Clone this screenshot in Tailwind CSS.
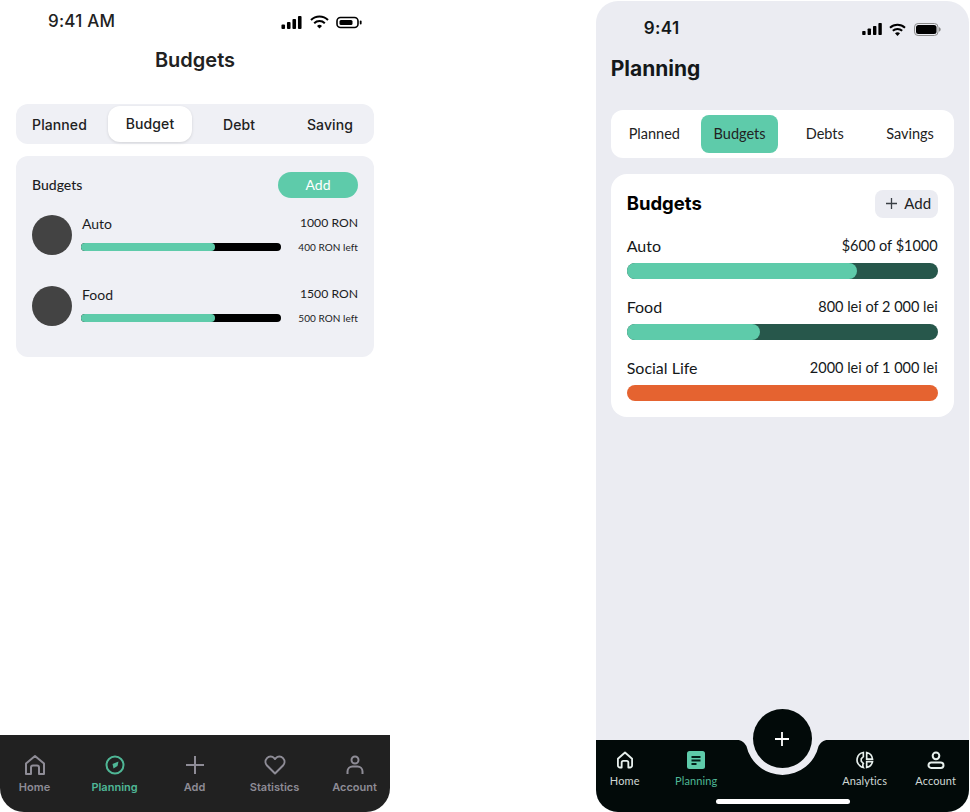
<!DOCTYPE html>
<html>
<head>
<meta charset="utf-8">
<script src="https://cdn.jsdelivr.net/npm/@tailwindcss/browser@4"></script>
</head>
<body class="bg-white">
<div class="flex w-[970px] h-[812px] overflow-hidden bg-white">

  <!-- LEFT PHONE -->
  <div class="w-[390px] h-[812px] flex flex-col font-['Inter',sans-serif] text-[#1c1c1e]">
    <div class="h-[42px] flex items-center justify-between pl-[48px] pr-[28px]">
      <span class="text-[17px] font-medium tracking-[0.2px] text-[#222] mt-[1px]">9:41 AM</span>
      <div class="flex items-center mt-[2px]">
        <svg width="21" height="13" viewBox="0 0 20.100 13"><rect x="0" y="8.500" width="3.600" height="4.500" rx="1"/><rect x="5.500" y="6" width="3.600" height="7" rx="1"/><rect x="11" y="3" width="3.600" height="10" rx="1"/><rect x="16.500" y="0" width="3.600" height="13" rx="1"/></svg>
        <svg width="19" height="14" viewBox="0 0 19 14" fill="none" stroke="#000" stroke-width="2" class="ml-[8px]"><path d="M1 5a12 12 0 0 1 17 0"/><path d="M4.200 8.200a7.500 7.500 0 0 1 10.600 0"/><path d="M9.500 13.600 7 11a3.500 3.500 0 0 1 5 0z" fill="#000" stroke="none"/></svg>
        <svg width="26" height="13" viewBox="0 0 26 13" class="ml-[7px]"><rect x="1" y="1.500" width="21" height="10" rx="3.500" fill="none" stroke="#000" stroke-width="1.600"/><rect x="3.500" y="4" width="13" height="5" rx="1.500"/><rect x="23.800" y="4.500" width="1.800" height="4" rx="0.900"/></svg>
      </div>
    </div>
    <h1 class="mt-[4px] h-[28px] text-center text-[20px] leading-[28px] font-semibold text-[#212121]">Budgets</h1>
    <div class="mx-4 mt-[30px] h-[40px] bg-[#eff0f5] rounded-[12px] grid grid-cols-[92px_84px_94px_88px] items-center text-[14px] font-medium text-center text-[#212121] tracking-[0.1px]">
      <span class="pr-[5px]">Planned</span>
      <span class="h-[36px] leading-[36px] bg-white rounded-[12px] shadow-[0_1px_3px_rgba(0,0,0,0.12)]">Budget</span>
      <span>Debt</span>
      <span>Saving</span>
    </div>
    <div class="mx-4 mt-[12px] h-[201px] bg-[#eff0f5] rounded-[12px] p-4 font-['Lato',sans-serif] text-[#1c1c1e]">
      <div class="flex items-center justify-between h-[26px]">
        <span class="text-[14px] font-medium -mt-[2px]">Budgets</span>
        <span class="w-[80px] h-[26px] leading-[26px] rounded-full bg-[#5ecbaa] text-white text-center text-[14px]">Add</span>
      </div>
      <div class="flex flex-col gap-[31px] mt-[17px]">
        <div class="flex h-[40px]">
          <div class="w-10 h-10 rounded-full bg-[#434343] shrink-0"></div>
          <div class="ml-[9px] w-[200px] shrink-0">
            <div class="pl-[1px] text-[14px] leading-[18px] h-[28px]">Auto</div>
            <div class="h-[8px] rounded-full bg-black"><div class="h-full w-[134px] rounded-full bg-[#5ecbaa]"></div></div>
          </div>
          <div class="flex-1 text-right">
            <div class="text-[12.200px] leading-[16px] h-[25px]">1000 RON</div>
            <div class="text-[10px] leading-[14px] tracking-[0.05px]">400 RON left</div>
          </div>
        </div>
        <div class="flex h-[40px]">
          <div class="w-10 h-10 rounded-full bg-[#434343] shrink-0"></div>
          <div class="ml-[9px] w-[200px] shrink-0">
            <div class="pl-[1px] text-[14px] leading-[18px] h-[28px]">Food</div>
            <div class="h-[8px] rounded-full bg-black"><div class="h-full w-[134px] rounded-full bg-[#5ecbaa]"></div></div>
          </div>
          <div class="flex-1 text-right">
            <div class="text-[12.200px] leading-[16px] h-[25px]">1500 RON</div>
            <div class="text-[10px] leading-[14px] tracking-[0.05px]">500 RON left</div>
          </div>
        </div>
      </div>
    </div>
    <nav class="mt-auto h-[77px] bg-[#212121] rounded-b-[24px] flex items-start text-[11px] font-semibold text-[#8e8c96] overflow-hidden">
      <div class="flex -ml-[5.500px] pt-[18px]">
        <div class="w-20 flex flex-col items-center">
          <svg width="24" height="24" viewBox="0 0 24 24" fill="none" stroke="#8e8c96" stroke-width="2" stroke-linejoin="round"><path d="M3 10.500 12 3l9 7.500V21H16v-6.500a2 2 0 0 0-2-2h-4a2 2 0 0 0-2 2V21H3z"/></svg>
          <span class="mt-[2px] leading-[16px]">Home</span>
        </div>
        <div class="w-20 flex flex-col items-center text-[#4fb796]">
          <svg width="24" height="24" viewBox="0 0 24 24" fill="none" stroke="#4fb796" stroke-width="2"><circle cx="12" cy="12" r="8.500"/><path d="M15.500 8.500 14.500 13 10.500 15.500 9.500 11z" fill="#4fb796" stroke="none"/></svg>
          <span class="mt-[2px] leading-[16px]">Planning</span>
        </div>
        <div class="w-20 flex flex-col items-center">
          <svg width="24" height="24" viewBox="0 0 24 24" fill="none" stroke="#8e8c96" stroke-width="2"><path d="M12 3v18M3 12h18"/></svg>
          <span class="mt-[2px] leading-[16px]">Add</span>
        </div>
        <div class="w-20 flex flex-col items-center">
          <svg width="24" height="24" viewBox="0 0 24 24" fill="none" stroke="#8e8c96" stroke-width="2" stroke-linejoin="round"><path d="M12 20.500 4 12.500a5.400 5.400 0 0 1 0-7.400 5 5 0 0 1 7.200 0l.8.9.8-.9a5 5 0 0 1 7.200 0 5.400 5.400 0 0 1 0 7.400z"/></svg>
          <span class="mt-[2px] leading-[16px]">Statistics</span>
        </div>
        <div class="w-20 flex flex-col items-center">
          <svg width="24" height="24" viewBox="0 0 24 24" fill="none" stroke="#8e8c96" stroke-width="2"><circle cx="12" cy="7" r="3.500"/><path d="M4.500 21v-2.500a5 5 0 0 1 5-5h5a5 5 0 0 1 5 5V21"/></svg>
          <span class="mt-[2px] leading-[16px]">Account</span>
        </div>
      </div>
    </nav>
  </div>

  <!-- RIGHT PHONE -->
  <div class="ml-[205.700px] w-[373px] h-[811px] mt-[1px] flex flex-col bg-[#ebecf2] rounded-[22px] font-['Lato',sans-serif] text-[#14181a] relative overflow-hidden">
    <div class="h-[55px] flex items-center justify-between pl-[48px] pr-[28px] pt-[1px]">
      <span class="text-[17px] font-semibold font-['Inter',sans-serif] tracking-[0.4px]">9:41</span>
      <div class="flex items-center">
        <svg width="20" height="12" viewBox="0 0 19.600 12"><rect x="0" y="8" width="3.400" height="4" rx="0.800"/><rect x="5.400" y="5.500" width="3.400" height="6.500" rx="0.800"/><rect x="10.800" y="3" width="3.400" height="9" rx="0.800"/><rect x="16.200" y="0" width="3.400" height="12" rx="0.800"/></svg>
        <svg width="17" height="13" viewBox="0 0 17 13" fill="none" stroke="#000" stroke-width="2" class="ml-[7px]"><path d="M1 4.800a11 11 0 0 1 15 0"/><path d="M3.800 7.800a7 7 0 0 1 9.400 0"/><path d="M8.500 13 6 10.300a3.400 3.400 0 0 1 5 0z" fill="#000" stroke="none"/></svg>
        <svg width="27" height="13" viewBox="0 0 27 13" class="ml-[8px]"><rect x="0.500" y="0.500" width="23.500" height="12" rx="3.600" fill="none" stroke="#8a8a8a"/><rect x="2" y="2" width="20.500" height="9" rx="2.500"/><path d="M25 4.300v4.400c1-.3 1.700-1.200 1.700-2.200S26 4.600 25 4.300z" fill="#8a8a8a"/></svg>
      </div>
    </div>
    <h1 class="mt-[1px] pl-[15px] h-[24px] text-[21px] leading-[24px] font-bold font-['Inter',sans-serif] text-[#14181a]">Planning</h1>
    <div class="mx-[15px] mt-[29px] h-[48px] bg-white rounded-[12px] grid grid-cols-4 items-center px-[1px] text-[14.500px] text-center text-[#222]">
      <span>Planned</span>
      <span class="h-[38px] leading-[38px] bg-[#5ecbaa] rounded-[8px] mx-[4px]">Budgets</span>
      <span>Debts</span>
      <span>Savings</span>
    </div>
    <div class="mx-[15px] mt-[16px] h-[243px] bg-white rounded-[16px] px-4 pt-4">
      <div class="flex items-center justify-between h-[28px]">
        <span class="text-[18.500px] font-bold font-['Inter',sans-serif] text-black -mt-[1px]">Budgets</span>
        <span class="w-[63px] h-[28px] bg-[#ebecf2] rounded-[8px] flex items-center justify-center gap-[7px] pl-[5px] pb-[1px] text-[15px] text-[#222]">
          <svg width="11" height="11" viewBox="0 0 11 11" stroke="#3a3f45" stroke-width="1.300"><path d="M5.500 0v11M0 5.500h11"/></svg>Add
        </span>
      </div>
      <div class="flex flex-col gap-[18px] mt-[18px]">
        <div>
          <div class="flex items-center justify-between h-[20px] text-[16px]"><span>Auto</span><span class="text-[14.500px]">$600 of $1000</span></div>
          <div class="mt-[7px] h-4 rounded-full bg-[#27574b]"><div class="h-full w-[230px] rounded-full bg-[#5ecbaa]"></div></div>
        </div>
        <div>
          <div class="flex items-center justify-between h-[20px] text-[16px]"><span>Food</span><span class="text-[14.500px]">800 lei of 2 000 lei</span></div>
          <div class="mt-[7px] h-4 rounded-full bg-[#27574b]"><div class="h-full w-[133px] rounded-full bg-[#5ecbaa]"></div></div>
        </div>
        <div>
          <div class="flex items-center justify-between h-[20px] text-[16px]"><span>Social Life</span><span class="text-[14.500px]">2000 lei of 1 000 lei</span></div>
          <div class="mt-[7px] h-4 rounded-full bg-[#e56330]"></div>
        </div>
      </div>
    </div>

    <nav class="mt-auto relative h-[72px] shrink-0 text-[11px] text-[#cfd8d5] tracking-[0.1px]">
      <svg class="absolute inset-0" width="373" height="72" viewBox="0 0 373 72" fill="#020a09"><path d="M0 0H141C146 0 148 2.500 150.400 6A37 37 0 0 0 222.600 6C225 2.500 227 0 232 0H373V72H0Z"/></svg>
      <div class="relative flex pt-[10px]">
        <div class="w-[58px] flex flex-col items-center">
          <svg width="20" height="20" viewBox="0 0 24 24" fill="none" stroke="#e6efec" stroke-width="2.200" stroke-linejoin="round"><path d="M3.500 10.500 12 3l8.500 7.500v8a2.500 2.500 0 0 1-2.500 2.500h-2v-6a2 2 0 0 0-2-2h-4a2 2 0 0 0-2 2v6H6a2.500 2.500 0 0 1-2.500-2.500z"/></svg>
          <span class="mt-[3px] leading-[16px]">Home</span>
        </div>
        <div class="w-[85px] flex flex-col items-center text-[#4fb796]">
          <svg width="18" height="18" viewBox="0 0 18 18" class="my-[1px]"><rect width="18" height="18" rx="2.500" fill="#5ecbaa"/><path d="M4.500 5h9v2h-9zM4.500 8.500h9v2h-9zM4.500 12h5v2h-5z" fill="#02201a"/></svg>
          <span class="mt-[3px] leading-[16px]">Planning</span>
        </div>
        <div class="ml-[88px] w-[76px] flex flex-col items-center">
          <svg width="20" height="20" viewBox="0 0 24 24" fill="none" stroke="#e6efec" stroke-width="2"><path d="M10 3a9 9 0 0 0-4 16 9 9 0 0 0 4 2c-1-2-1-3 0-5l-2.500-2.500v-3L10 8z"/><path d="M14 3a9 9 0 0 1 7 8h-7zM14 14h7a9 9 0 0 1-7 7z"/></svg>
          <span class="mt-[3px] leading-[16px]">Analytics</span>
        </div>
        <div class="w-[66px] flex flex-col items-center">
          <svg width="20" height="20" viewBox="0 0 24 24" fill="none" stroke="#e6efec" stroke-width="2.400"><circle cx="12" cy="7" r="4"/><rect x="3" y="15" width="18" height="6.500" rx="3.250"/></svg>
          <span class="mt-[3px] leading-[16px]">Account</span>
        </div>
      </div>
      <div class="absolute left-[120px] bottom-[8px] w-[134px] h-[5px] rounded-full bg-white"></div>
    </nav>
    <div class="absolute left-[157px] top-[708px] w-[59px] h-[59px] rounded-full bg-[#020a09] flex items-center justify-center">
      <svg width="14" height="14" viewBox="0 0 14 14" stroke="#fff" stroke-width="1.800"><path d="M7 0v14M0 7h14"/></svg>
    </div>
  </div>
</div>
</body>
</html>
